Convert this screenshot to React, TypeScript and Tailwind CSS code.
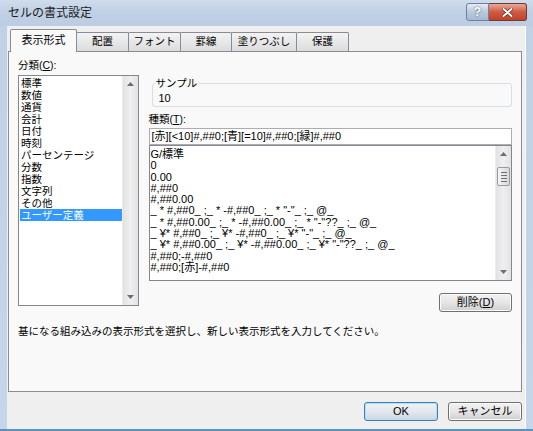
import React from 'react';

const categories = [
  '標準',
  '数値',
  '通貨',
  '会計',
  '日付',
  '時刻',
  'パーセンテージ',
  '分数',
  '指数',
  '文字列',
  'その他',
  'ユーザー定義'
];

const formats = [
  'G/標準',
  '0',
  '0.00',
  '#,##0',
  '#,##0.00',
  '_ * #,##0_ ;_ * -#,##0_ ;_ * "-"_ ;_ @_ ',
  '_ * #,##0.00_ ;_ * -#,##0.00_ ;_ * "-"??_ ;_ @_ ',
  '_ ¥* #,##0_ ;_ ¥* -#,##0_ ;_ ¥* "-"_ ;_ @_ ',
  '_ ¥* #,##0.00_ ;_ ¥* -#,##0.00_ ;_ ¥* "-"??_ ;_ @_ ',
  '#,##0;-#,##0',
  '#,##0;[赤]-#,##0'
];

const tabs = [
  { label: '表示形式', w: 'w-[67px]', active: true },
  { label: '配置', w: 'w-[53px]' },
  { label: 'フォント', w: 'w-[53px]' },
  { label: '罫線', w: 'w-[52px]' },
  { label: '塗りつぶし', w: 'w-[66px]' },
  { label: '保護', w: 'w-[53px]' }
];

const Arrow: React.FC<{ down?: boolean }> = ({ down }) => (
  <svg width="7" height="4" viewBox="0 0 7 4">
    <path d={down ? 'M0 0 L7 0 L3.5 4 Z' : 'M0 4 L7 4 L3.5 0 Z'} fill="#6d6d6d" />
  </svg>
);

// vista style scrollbar, thumb optional
const ScrollBar: React.FC<{ thumb?: boolean }> = ({ thumb }) => (
  <div className="w-[16px] flex flex-col bg-gradient-to-r from-[#e2e2e2] via-[#efefef] to-[#e2e2e2] border-l border-[#ececec]">
    <div className="h-[16px] flex items-center justify-center">
      <Arrow />
    </div>
    {thumb && (
      <div className="mx-[1px] mt-[5px] h-[19px] rounded-[2px] border border-[#9a9a9a] bg-gradient-to-r from-[#f4f4f4] to-[#d9d9d9] flex flex-col items-center justify-center gap-[2px]">
        <div className="w-[6px] h-px bg-[#6f6f6f]" />
        <div className="w-[6px] h-px bg-[#6f6f6f]" />
        <div className="w-[6px] h-px bg-[#6f6f6f]" />
        <div className="w-[6px] h-px bg-[#6f6f6f]" />
      </div>
    )}
    <div className="flex-1" />
    <div className="h-[16px] flex items-center justify-center">
      <Arrow down />
    </div>
  </div>
);

const Button: React.FC<{ children: React.ReactNode; w: string; focused?: boolean }> = ({
  children,
  w,
  focused
}) => (
  <div
    className={
      focused
        ? `${w} h-[19px] rounded-[3px] border border-[#3c7fb1] bg-gradient-to-b from-[#eef3f7] via-[#e2e8ee] to-[#cdd6df] flex items-center justify-center text-[11px] text-black shadow-[inset_0_0_0_1px_#b7def5]`
        : `${w} h-[19px] rounded-[3px] border border-[#707070] bg-gradient-to-b from-[#f2f2f2] via-[#e6e6e6] to-[#cfcfcf] flex items-center justify-center text-[11px] text-black shadow-[inset_0_0_0_1px_#fbfbfb]`
    }
  >
    {children}
  </div>
);

const App: React.FC = () => {
  return (
    <div className="w-[533px] h-[431px] flex flex-col bg-gradient-to-b from-[#c0d0e5] to-[#c6d6ea] font-['Liberation_Sans','Noto_Sans_CJK_JP',sans-serif] text-black overflow-hidden border-b-[2px] border-[#5b93bf]">
      {/* TITLE BAR */}
      <div className="h-[26px] flex items-start justify-between pl-[8px] pr-[6px] bg-gradient-to-b from-[#cfdcec] via-[#bfcfe4] to-[#bccde3]">
        <div className="h-[26px] flex items-center text-[12px] text-[#1b1b1b]">セルの書式設定</div>
        <div className="flex pt-[3px]">
          <div className="w-[23px] h-[18px] rounded-l-[3px] border border-[#6c819e] bg-gradient-to-b from-[#e4ecf5] via-[#b9cade] to-[#a4b9d2] flex items-center justify-center text-[12px] font-bold text-white [text-shadow:0_0_2px_#3d4f66]">
            ?
          </div>
          <div className="w-[38px] h-[18px] rounded-r-[3px] border border-l-0 border-[#6e3b33] bg-gradient-to-b from-[#e8a897] via-[#cf5a42] to-[#c24128] flex items-center justify-center">
            <svg width="11" height="9" viewBox="0 0 11 9">
              <path d="M1.5 1 L9.5 8 M9.5 1 L1.5 8" stroke="#5a1e14" strokeWidth="3.2" strokeLinecap="round" />
              <path d="M1.5 1 L9.5 8 M9.5 1 L1.5 8" stroke="#ffffff" strokeWidth="2" strokeLinecap="round" />
            </svg>
          </div>
        </div>
      </div>

      {/* BODY */}
      <div className="flex-1 mx-[7px] flex flex-col bg-[#efefef] border-r border-[#fafcfe]">
        {/* TABS */}
        <div className="h-[25px] flex items-end pl-[3px]">
          {tabs.map((t) =>
            t.active ? (
              <div
                key={t.label}
                className={`${t.w} h-[23px] -mb-px relative z-10 border border-b-0 border-[#898c95] rounded-t-[2px] bg-[#f9f9f9] flex items-center justify-center text-[11px] pb-[2px]`}
              >
                {t.label}
              </div>
            ) : (
              <div
                key={t.label}
                className={`${t.w} h-[19px] -ml-px border border-b-0 border-[#898c95] rounded-t-[2px] bg-gradient-to-b from-[#f3f3f3] to-[#dcdcdc] flex items-center justify-center text-[10.5px]`}
              >
                {t.label}
              </div>
            )
          )}
        </div>

        {/* PANEL */}
        <div className="ml-px mr-[3px] h-[341px] border border-[#898c95] bg-[#f9f9f9] px-[9px] pt-[7px]">
          <div className="flex gap-[10px]">
            {/* LEFT COLUMN */}
            <div className="w-[121px] flex flex-col">
              <div className="h-[12px] leading-[12px] text-[10.5px]">
                分類(<span className="underline">C</span>):
              </div>
              <div className="mt-[4px] h-[231px] border border-[#828790] bg-white flex">
                <div className="flex-1 pt-px pl-px text-[10.5px] leading-[12px]">
                  {categories.map((c) => (
                    <div
                      key={c}
                      className={
                        c === 'ユーザー定義'
                          ? 'h-[12px] pl-[1px] bg-[#3399ff] text-white'
                          : 'h-[12px] pl-[1px]'
                      }
                    >
                      {c}
                    </div>
                  ))}
                </div>
                <ScrollBar />
              </div>
            </div>

            {/* RIGHT COLUMN */}
            <div className="w-[365px] flex flex-col">
              <div className="mt-[24px] ml-[3px] h-[24px] relative rounded-[3px] border border-[#d5dfe5] flex items-center pl-[6px] pt-[5px]">
                <div className="absolute -top-[7px] left-[2px] px-[1px] bg-[#f9f9f9] text-[10.5px] leading-[12px]">
                  サンプル
                </div>
                <span className="text-[11px] leading-[12px]">10</span>
              </div>
              <div className="mt-[6px] h-[12px] leading-[12px] text-[10.5px]">
                種類(<span className="underline">T</span>):
              </div>
              <div className="mt-[3px] h-[17px] border border-[#abadb3] bg-white flex items-center pl-[2px] text-[11px] whitespace-nowrap">
                [赤][&lt;10]#,##0;[青][=10]#,##0;[緑]#,##0
              </div>
              <div className="h-[136px] border border-[#828790] bg-white flex">
                <div className="flex-1 pt-[3px] pl-[1px] text-[11px] leading-[11.3px] whitespace-pre overflow-hidden">
                  {formats.map((f) => (
                    <div key={f} className="h-[11.3px]">
                      {f}
                    </div>
                  ))}
                </div>
                <ScrollBar thumb />
              </div>
              <div className="mt-[12px] flex justify-end">
                <Button w="w-[73px]">
                  削除(<span className="underline">D</span>)
                </Button>
              </div>
            </div>
          </div>

          <div className="mt-[13px] text-[10.5px] leading-[12px]">
            基になる組み込みの表示形式を選択し、新しい表示形式を入力してください。
          </div>
        </div>

        {/* FOOTER BUTTONS */}
        <div className="mt-[10px] mr-[3px] flex justify-end gap-[10px]">
          <Button w="w-[74px]" focused>
            OK
          </Button>
          <Button w="w-[74px]">キャンセル</Button>
        </div>
      </div>
    </div>
  );
};

export default App;
